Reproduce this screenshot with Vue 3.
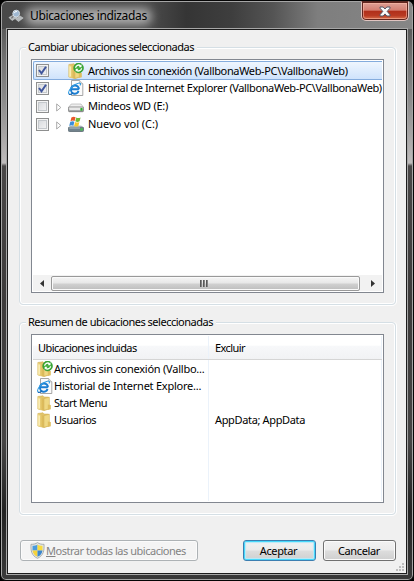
<script setup>
import { ref } from 'vue'

const tree = ref([
  { label: 'Archivos sin conexión (VallbonaWeb-PC\\VallbonaWeb)', icon: 'sync', checked: true, selected: true, size: 'row-a' },
  { label: 'Historial de Internet Explorer (VallbonaWeb-PC\\VallbonaWeb)', icon: 'ie', checked: true, size: 'row-b' },
  { label: 'Mindeos WD (E:)', icon: 'drive', expandable: true, size: 'row-c' },
  { label: 'Nuevo vol (C:)', icon: 'windrive', expandable: true, size: 'row-d' },
])

const summary = [
  { label: 'Archivos sin conexión (Vallbo...', icon: 'sync', exclude: '' },
  { label: 'Historial de Internet Explore...', icon: 'ie', exclude: '' },
  { label: 'Start Menu', icon: 'folder', exclude: '' },
  { label: 'Usuarios', icon: 'folder', exclude: 'AppData; AppData' },
]
</script>

<template>
  <svg class="defs" width="0" height="0" aria-hidden="true">
    <defs>
      <linearGradient id="gold" x1="0" x2="1"><stop offset="0" stop-color="#f5e193" /><stop offset="1" stop-color="#d9b550" /></linearGradient>
      <linearGradient id="metal" x1="0" y1="0" x2="0" y2="1"><stop offset="0" stop-color="#f4f4f4" /><stop offset="1" stop-color="#8d9193" /></linearGradient>
      <symbol id="folder" viewBox="0 0 16 16">
        <path d="M.8 1.5 L6 .7 L7.2 2 H11.5 V14 L7 15.5 L.8 14Z" fill="#e0c369" stroke="#d2af50" stroke-width=".5" />
        <path d="M.9 2.2 L6.3 3.6 V15.6 L.9 14Z" fill="url(#gold)" />
        <path d="M6.9 3.6 L12.4 2.2 V13.8 L6.9 15.4Z" fill="#efd883" stroke="#cfab4c" stroke-width=".5" />
        <path d="M10.8 9.4 L13.8 10 V14.2 L10.8 15Z" fill="#dfbe5f" />
        <path d="M2.2 3.6 V13.5" stroke="#fff9d7" stroke-width=".9" />
      </symbol>
      <symbol id="sync" viewBox="0 0 16 16">
        <use href="#folder" width="16" height="16" />
        <circle cx="10.6" cy="5" r="4.9" fill="#3cab36" stroke="#1f8b24" stroke-width=".5" />
        <path d="M7.6 4.8 A3.1 3.1 0 0 1 12.6 2.7 M13.6 5.2 A3.1 3.1 0 0 1 8.6 7.3" fill="none" stroke="#fff" stroke-width="1.3" />
        <path d="M13.5 1.3 V4.2 H10.6Z M7.7 8.7 V5.8 H10.6Z" fill="#fff" />
      </symbol>
      <symbol id="ie" viewBox="0 0 16 16">
        <path d="M3.5 .5 H11.6 L14.8 3.8 V15.5 H3.5Z" fill="#fbfbfb" stroke="#8f8f8f" stroke-width=".8" />
        <path d="M11.6 .5 V3.8 H14.8" fill="#ddd" stroke="#aaa" stroke-width=".6" />
        <path d="M10.9 9.3 H3.1 A3.9 3.9 0 1 1 10.9 9.3 M3.1 9.3 A3.8 3.8 0 0 0 10.5 11" fill="none" stroke="#1b7ed2" stroke-width="2" />
        <path d="M1 14 C-1 11 5.6 4 10.2 3.2 C12.8 2.6 13 4 11.9 5.5" fill="none" stroke="#2f9be2" stroke-width="1.1" />
        <path d="M1 14 C2 15 3.8 14 5.2 13" fill="none" stroke="#1569b9" stroke-width="1.1" />
      </symbol>
      <symbol id="drive" viewBox="0 0 16 16">
        <path d="M3.2 6 H13 L15.7 9.5 H.4Z" fill="#eeeeee" stroke="#aaa" stroke-width=".6" />
        <rect x=".4" y="9" width="15.2" height="4.7" rx="1.2" fill="url(#metal)" stroke="#777" stroke-width=".8" />
        <rect x="1.5" y="9.8" width="10.5" height="2.2" fill="#e8e8e8" />
        <rect x="12.5" y="10" width="2" height="2.7" fill="#2db72d" />
      </symbol>
      <symbol id="windrive" viewBox="0 0 16 16">
        <path d="M2.4 9.5 H13.2 L15.7 12 H.4Z" fill="#c4cdd2" />
        <rect x=".4" y="11.2" width="15.2" height="4.3" rx="1" fill="#71828c" stroke="#5c6a72" stroke-width=".8" />
        <path d="M1.4 12 H12" stroke="#b5c4cb" />
        <rect x="12.6" y="12.2" width="1.9" height="2.3" fill="#3fd33c" />
        <path d="M3.4 1.5 C5 .4 6.2 .4 7.6 1.2 L6.6 5.1 C5.2 4.3 4 4.4 2.4 5.4Z" fill="#e8572a" />
        <path d="M8.3 1.5 C9.8 2.3 11 2.2 12.6 1.4 L11.6 5.3 C10 6.2 8.8 6.1 7.3 5.3Z" fill="#72b936" />
        <path d="M2.2 6.1 C3.8 5 5 5 6.4 5.8 L5.4 9.8 C4 9 2.8 9 1.2 10Z" fill="#3b8edb" />
        <path d="M7.1 6 C8.6 6.8 9.8 6.8 11.4 5.9 L10.4 10 C8.8 10.8 7.5 10.7 6.1 10Z" fill="#f8c82f" />
      </symbol>
    </defs>
  </svg>

  <div class="window">
    <header class="titlebar">
      <svg class="app-icon" width="16" height="14" viewBox="0 0 16 14">
        <path d="M1 8.5 L5.5 6 L9 8.5 L4 11.5Z M7.5 10 L12 7 L15.2 9 L10.5 12.5Z" fill="#b6bbbd" stroke="#d4d7d8" stroke-width=".6" />
        <path d="M5.5 7 L3.4 9.4" stroke="#777" stroke-width="1.4" />
        <circle cx="8.2" cy="4.6" r="3.4" fill="#9fb9d3" stroke="#d3dde4" stroke-width="1" />
        <path d="M6.3 4.2 A2.2 2.2 0 0 1 9 2.6" fill="none" stroke="#fff" />
      </svg>
      <h1 class="title">Ubicaciones indizadas</h1>
      <button class="close" aria-label="Cerrar">
        <svg width="12" height="11" viewBox="0 0 12 11">
          <path d="M1 1 H4.2 L6 3 L7.8 1 H11 V2.2 L8.2 5.4 L11 8.7 V10 H7.8 L6 7.9 L4.2 10 H1 V8.7 L3.8 5.4 L1 2.2Z" fill="#fafafa" stroke="#535666" stroke-width="1" />
        </svg>
      </button>
    </header>

    <main class="client">
      <section class="group group-tree">
        <h2 class="legend">Cambiar ubicaciones seleccionadas</h2>
        <div class="box tree">
          <div class="rows">
            <div v-for="item in tree" :key="item.label" class="tree-row" :class="{ selected: item.selected }">
              <span class="check">
                <svg v-if="item.checked" width="9" height="9" viewBox="0 0 9 9"><path d="M1 4 L3.5 7.3 L8 .8" fill="none" stroke="#40569c" stroke-width="2" /></svg>
              </span>
              <span class="expander">
                <svg v-if="item.expandable" width="6" height="9" viewBox="0 0 6 9"><path d="M.7 .9 V8 L4.8 4.5Z" fill="#fff" stroke="#a1a1a1" stroke-width=".9" /></svg>
              </span>
              <svg class="icon" width="16" height="16"><use :href="'#' + item.icon" width="16" height="16" /></svg>
              <span class="label" :class="item.size">{{ item.label }}</span>
            </div>
          </div>
          <div class="scrollbar">
            <span class="arrow"><svg width="4" height="7" viewBox="0 0 4 7"><path d="M4 0 V7 L0 3.5Z" fill="#333" /></svg></span>
            <span class="thumb"><i></i><i></i><i></i></span>
            <span class="arrow next"><svg width="4" height="7" viewBox="0 0 4 7"><path d="M0 0 V7 L4 3.5Z" fill="#333" /></svg></span>
          </div>
        </div>
      </section>

      <section class="group group-summary">
        <h2 class="legend">Resumen de ubicaciones seleccionadas</h2>
        <div class="box summary">
          <div class="head">
            <span class="cell first">Ubicaciones incluidas</span>
            <span class="cell">Excluir</span>
          </div>
          <div class="body">
            <div v-for="item in summary" :key="item.label" class="sum-row">
              <span class="cell first">
                <svg class="icon" width="16" height="16"><use :href="'#' + item.icon" width="16" height="16" /></svg>
                <span class="name">{{ item.label }}</span>
              </span>
              <span class="cell">{{ item.exclude }}</span>
            </div>
            <div class="filler"><span class="cell first"></span><span class="cell"></span></div>
          </div>
        </div>
      </section>

      <footer class="actions">
        <button class="btn all" disabled>
          <svg class="shield" width="15" height="17" viewBox="0 0 15 17">
            <path d="M7.5 .6 C5.6 2 3.4 2.4 1 2.3 C.6 8.8 1.6 13.6 7.5 16.3 C13.4 13.6 14.4 8.8 14 2.3 C11.6 2.4 9.4 2 7.5 .6Z" fill="#e4e6e5" stroke="#a3a8a8" stroke-width=".9" />
            <path d="M7.5 2.4 C6 3.4 4.4 3.8 2.5 3.8 V8.4 H7.5Z" fill="#4a9bdd" />
            <path d="M7.5 2.4 C9 3.4 10.6 3.8 12.5 3.8 V8.4 H7.5Z" fill="#f8dc3f" />
            <path d="M2.5 8.4 C3 11.3 4.3 13.3 7.5 14.8 V8.4Z" fill="#f5d33c" />
            <path d="M12.5 8.4 C12 11.3 10.7 13.3 7.5 14.8 V8.4Z" fill="#3a86cf" />
          </svg>
          <span class="all-text"><u>M</u>ostrar todas las ubicaciones</span>
        </button>
        <button class="btn ok"><span>Aceptar</span></button>
        <button class="btn cancel"><span>Cancelar</span></button>
      </footer>
      <svg class="grip" width="9" height="9" viewBox="0 0 9 9">
        <path d="M6 0h2v2h-2z M3 3h2v2h-2z M6 3h2v2h-2z M0 6h2v2h-2z M3 6h2v2h-2z M6 6h2v2h-2z" fill="#bdbdbd" />
      </svg>
    </main>
  </div>
</template>

<style>
body {
  background: #000;
  overflow: hidden;
}
</style>

<style scoped>
* {
  box-sizing: border-box;
}
.defs {
  position: absolute;
}
.window {
  width: 414px;
  height: 581px;
  display: flex;
  flex-direction: column;
  padding: 0 5px 5px;
  border: 1px solid #050505;
  border-radius: 7px 7px 6px 6px;
  box-shadow: inset 0 0 0 1px #a5a5a5;
  background-color: #444;
  background-image: linear-gradient(180deg, #777 0, #5c5c5c 30px, #747474 60px, #8c8c8c 100px, #a5a3a3 132px, #bfbcbc 162px, #494747 165px, #3d3b3b 300px, #464545 440px, #222 510px, #3a3a3a 100%);
  font-family: "Noto Sans", sans-serif;
  font-size: 11px;
  line-height: 16px;
  letter-spacing: -0.35px;
  color: #000;
  white-space: nowrap;
}
.titlebar {
  height: 27px;
  flex: none;
  display: flex;
  align-items: flex-start;
  margin: 1px -4px 0;
  padding: 0 4px;
  border-radius: 5px 5px 0 0;
  background-image: linear-gradient(90deg, #484848 0, #4b4b4b 36%, #353535 45%, #3e3e3e 56%, #545454 66%, #7e7e7e 77%, #868686 100%);
}
.app-icon {
  margin: 7px 0 0 2px;
}
.title {
  position: relative;
  z-index: 0;
  margin: 2px 0 0 -4px;
  padding: 3px 12px 3px 10px;
  font-size: 12px;
  font-weight: 400;
  line-height: 17px;
  letter-spacing: -0.35px;
}
.title::before {
  content: "";
  position: absolute;
  z-index: -1;
  inset: 4px 7px 2px 5px;
  border-radius: 9px;
  background: #acacac;
  filter: blur(5px);
}
.close {
  width: 48px;
  height: 20px;
  margin: -1px -1px 0 auto;
  padding: 0;
  display: flex;
  align-items: center;
  justify-content: center;
  border: 1px solid #e0c4c0;
  border-top-color: #5c2a24;
  border-radius: 0 0 5px 5px;
  box-shadow: inset 0 0 0 1px #61251e, inset 0 0 0 2px rgba(255, 190, 170, .55);
  background: linear-gradient(180deg, #e0a59b 0, #d47d70 46%, #b02f1a 50%, #b93a22 75%, #db7a55 100%);
}
.client {
  position: relative;
  flex: 1;
  display: flex;
  flex-direction: column;
  padding: 17px 9px 10px 11px;
  border: 1px solid #1c1c1c;
  outline: 1px solid #a7a7a7;
  margin: 0 1px 1px;
  background: #f0f0f0;
}
.group {
  flex: none;
  width: 377px;
  border: 1px solid #d5dfe5;
  border-radius: 4px;
  box-shadow: inset 0 0 0 1px #fff, 0 1px 0 #fff, 1px 0 0 #fff;
  padding: 0 11px;
}
.group-tree {
  height: 258px;
}
.group-summary {
  height: 193px;
  margin-top: 17px;
}
.legend {
  display: block;
  width: max-content;
  height: 16px;
  margin: -9px 0 4px -5px;
  padding: 0 3px 0 2px;
  font-size: 11px;
  font-weight: 400;
  letter-spacing: -0.49px;
  background: #f0f0f0;
}
.box {
  width: 353px;
  background: #fff;
  border: 1px solid #828790;
}
.tree {
  height: 234px;
  display: flex;
  flex-direction: column;
  justify-content: space-between;
  padding: 1px;
}
.tree-row {
  height: 18px;
  display: flex;
  align-items: center;
  padding-left: 3px;
}
.tree-row.selected {
  height: 19px;
  margin-bottom: -1px;
  border: solid #84acdd;
  border-width: 1px 0 1px 1px;
  border-radius: 2px 0 0 2px;
  padding-left: 2px;
  background: linear-gradient(180deg, #eff6fe, #cfe3fc);
}
.check {
  width: 13px;
  height: 13px;
  flex: none;
  display: flex;
  align-items: center;
  justify-content: center;
  border: 1px solid #8e8f8f;
  box-shadow: inset 0 0 0 1px #f4f4f4, inset 0 0 0 2px #c4c8cc;
  background: linear-gradient(135deg, #d3d6da, #f7f7f7);
}
.expander {
  width: 19px;
  flex: none;
  display: flex;
  padding: 2px 0 0 7px;
}
.icon {
  flex: none;
}
.label {
  margin-left: 4px;
}
.row-b {
  letter-spacing: -0.38px;
}
.row-c {
  letter-spacing: -0.28px;
}
.row-d {
  letter-spacing: -0.04px;
}
.scrollbar {
  height: 16px;
  display: flex;
  align-items: center;
  background: #f2f2f2;
}
.arrow {
  width: 18px;
  display: flex;
  justify-content: center;
}
.arrow.next {
  flex: 1;
  padding-left: 4px;
}
.thumb {
  width: 309px;
  height: 15px;
  display: flex;
  align-items: center;
  justify-content: center;
  gap: 1px;
  padding-right: 3px;
  border: 1px solid #999;
  border-radius: 2px;
  box-shadow: inset 0 0 0 1px #fafafa;
  background: linear-gradient(180deg, #f5f5f5 0, #e7e7e7 48%, #d1d1d1 52%, #bdbdbd 100%);
}
.thumb i {
  width: 2px;
  height: 7px;
  background: linear-gradient(90deg, #444, #999);
}
.summary {
  height: 169px;
  display: flex;
  flex-direction: column;
  padding: 1px;
}
.head {
  height: 24px;
  flex: none;
  display: flex;
  letter-spacing: -0.57px;
  border-bottom: 1px solid #d5d5d5;
  background: linear-gradient(180deg, #fff 0, #fff 40%, #f7f8fa 44%, #f1f2f4 100%);
}
.cell {
  flex: 1;
  display: flex;
  align-items: center;
  padding-left: 6px;
  border-right: 1px solid #ebf2fa;
}
.cell.first {
  flex: none;
  width: 176px;
  padding-left: 4px;
}
.head .cell {
  padding-top: 1px;
}
.head .cell.first {
  padding-left: 5px;
}
.body {
  flex: 1;
  display: flex;
  flex-direction: column;
}
.sum-row {
  height: 17px;
  display: flex;
}
.filler {
  flex: 1;
  display: flex;
}
.name {
  margin-left: 1px;
  letter-spacing: -0.23px;
}
.sum-row:nth-child(n + 3) .name {
  letter-spacing: -0.42px;
}
.actions {
  display: flex;
  margin-top: 25px;
}
.btn {
  height: 21px;
  padding: 0;
  display: flex;
  align-items: center;
  justify-content: center;
  font: inherit;
  letter-spacing: -0.35px;
  color: #000;
  border: 1px solid #707070;
  border-radius: 3px;
  box-shadow: inset 0 0 0 1px #fbfbfb;
  background: linear-gradient(180deg, #f2f2f2 0, #ebebeb 48%, #dddddd 52%, #cfcfcf 100%);
}
.all {
  width: 178px;
  margin-left: 1px;
  justify-content: flex-start;
  padding-left: 9px;
  gap: 1px;
  color: #838383;
  border-color: #adb2b5;
  background: #f4f4f4;
}
.shield {
  flex: none;
}
.all-text {
  letter-spacing: -0.47px;
}
.ok {
  width: 73px;
  margin-left: 45px;
  padding-right: 2px;
  border-color: #3c7fb1;
  box-shadow: inset 0 0 0 1px #46d8fb, inset 0 0 1px 2px #b9e9f8;
}
.cancel {
  width: 73px;
  margin-left: 7px;
  padding-right: 1px;
}
.grip {
  position: absolute;
  right: 1px;
  bottom: 1px;
}
</style>
